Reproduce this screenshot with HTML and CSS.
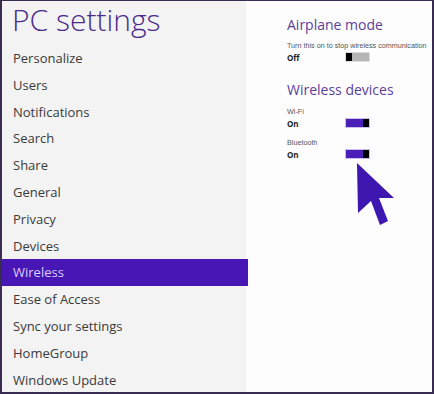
FILE: index.html
```html
<!doctype html>
<html lang="en">

<head>
	<meta charset="UTF-8">
	<title>PC settings</title>
	<link rel="stylesheet" href="styles.css">
</head>

<body>
	<div class="frame">
		<div class="side">
			<h1>PC settings</h1>
			<ul class="menu">
				<li>Personalize</li>
				<li>Users</li>
				<li>Notifications</li>
				<li>Search</li>
				<li>Share</li>
				<li>General</li>
				<li>Privacy</li>
				<li>Devices</li>
				<li class="active">Wireless</li>
				<li>Ease of Access</li>
				<li>Sync your settings</li>
				<li>HomeGroup</li>
				<li>Windows Update</li>
			</ul>
		</div>
		<div class="main">
			<h2>Airplane mode</h2>
			<div class="label">Turn this on to stop wireless communication</div>
			<div class="row">
				<b>Off</b>
				<span class="toggle off"><i></i></span>
			</div>

			<h2 class="second">Wireless devices</h2>
			<div class="label wifi">Wi-Fi</div>
			<div class="row">
				<b>On</b>
				<span class="toggle on"><i></i></span>
			</div>
			<div class="label bt">Bluetooth</div>
			<div class="row">
				<b>On</b>
				<span class="toggle on"><i></i></span>
			</div>

			<svg class="cursor" width="50" height="70" viewBox="0 0 50 70">
				<polygon points="1,1 38,36 23,36 32,59 24,63 15,39 2,51" fill="#3d17b0" />
			</svg>
		</div>
	</div>
</body>

</html>
```

FILE: styles.css
```css
body {
	margin: 0;
	font-family: "Open Sans", sans-serif;
}

.frame {
	width: 434px;
	height: 394px;
	box-sizing: border-box;
	border: 2px solid #3a2d52;
	border-top-width: 1px;
	display: flex;
	background: #fefdfe;
}

.side {
	width: 244px;
	background: #f3f3f3;
	flex: none;
}

h1 {
	margin: 0;
	height: 44px;
	padding-left: 10px;
	font-size: 30px;
	font-weight: 300;
	line-height: 38px;
	color: #4a2c8c;
}

.menu {
	list-style: none;
	margin: 0;
	padding: 0;
}

.menu li {
	height: 26.8px;
	line-height: 26.8px;
	padding-left: 11px;
	font-size: 13px;
	color: #3a3a3a;
}

.menu li.active {
	background: #4716b5;
	color: #dccdfc;
	margin-right: -2px;
}

.main {
	flex: 1;
	padding: 14px 0 0 41px;
	position: relative;
}

h2 {
	margin: 0;
	font-size: 14px;
	font-weight: 400;
	line-height: 20px;
	color: #5b3f9a;
}

h2.second {
	margin-top: 17px;
}

.label {
	font-family: "Liberation Sans", sans-serif;
	font-size: 7.2px;
	color: #555;
	margin-top: 6px;
	line-height: 10px;
	white-space: nowrap;
}

.label.wifi {
	margin-top: 7px;
}

.label.bt {
	margin-top: 9px;
}

.row {
	display: flex;
	align-items: center;
	height: 12px;
}

.row b {
	width: 58px;
	font-size: 8px;
	color: #222;
}

.toggle {
	width: 23px;
	height: 8px;
	display: flex;
	border: 1px solid #cbbff0;
}

.toggle i {
	width: 6px;
	background: #000;
}

.toggle.on {
	background: #4a1fb8;
	justify-content: flex-end;
}

.toggle.off {
	background: #b5b5b5;
	border-color: #ddd;
}

.cursor {
	position: absolute;
	left: 110px;
	top: 161px;
}
```
